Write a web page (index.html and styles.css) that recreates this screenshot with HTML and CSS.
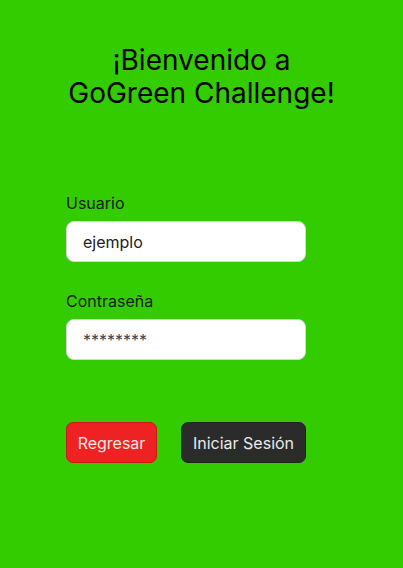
FILE: index.html
```html
<!DOCTYPE html>
<html lang="es">
<head>
<meta charset="utf-8">
<link rel="stylesheet" href="styles.css">
</head>
<body>
<main class="page">
  <h1 class="title">¡Bienvenido a<br>GoGreen Challenge!</h1>
  <form class="form">
    <label class="field">
      <span class="label">Usuario</span>
      <input class="input" type="text" value="ejemplo">
    </label>
    <label class="field">
      <span class="label">Contraseña</span>
      <input class="input input-pass" type="text" value="********">
    </label>
    <div class="actions">
      <button type="button" class="btn btn-back">Regresar</button>
      <button type="button" class="btn btn-login">Iniciar Sesión</button>
    </div>
  </form>
</main>
</body>
</html>
```
FILE: styles.css
```css
* { box-sizing: border-box; }
html, body { margin: 0; padding: 0; }
body {
  background: #33cc00;
  font-family: Inter, "Noto Sans", sans-serif;
  color: #111;
  width: 403px;
  height: 568px;
  overflow: hidden;
}
.page {
  display: flex;
  flex-direction: column;
  padding-top: 44px;
}
.title {
  margin: 0;
  font-size: 28px;
  font-weight: 400;
  line-height: 33px;
  text-align: center;
  color: #000;
}
.form {
  width: 240px;
  margin: 83px 0 0 66px;
  display: flex;
  flex-direction: column;
}
.field {
  display: flex;
  flex-direction: column;
  margin-bottom: 29px;
}
.label {
  font-size: 16px;
  line-height: 20px;
  color: #1a1a1a;
  margin-bottom: 8px;
}
.input {
  height: 41px;
  border: 1px solid #d6d6d6;
  border-radius: 8px;
  background: #fff;
  padding: 0 16px;
  font-family: inherit;
  font-size: 16px;
  color: #222;
  outline: none;
}
.input-pass { color: #444; }
.actions {
  display: flex;
  justify-content: space-between;
  margin-top: 33px;
}
.btn {
  height: 41px;
  border-radius: 7px;
  font-family: inherit;
  font-size: 16px;
  padding: 0;
  white-space: nowrap;
  cursor: pointer;
}
.btn-back {
  background: #ee2222;
  border: 1px solid #c81818;
  color: #fbe6e6;
  width: 91px;
}
.btn-login {
  background: #2b2b2b;
  border: 1px solid #222;
  color: #eaeaea;
  width: 125px;
}
```
